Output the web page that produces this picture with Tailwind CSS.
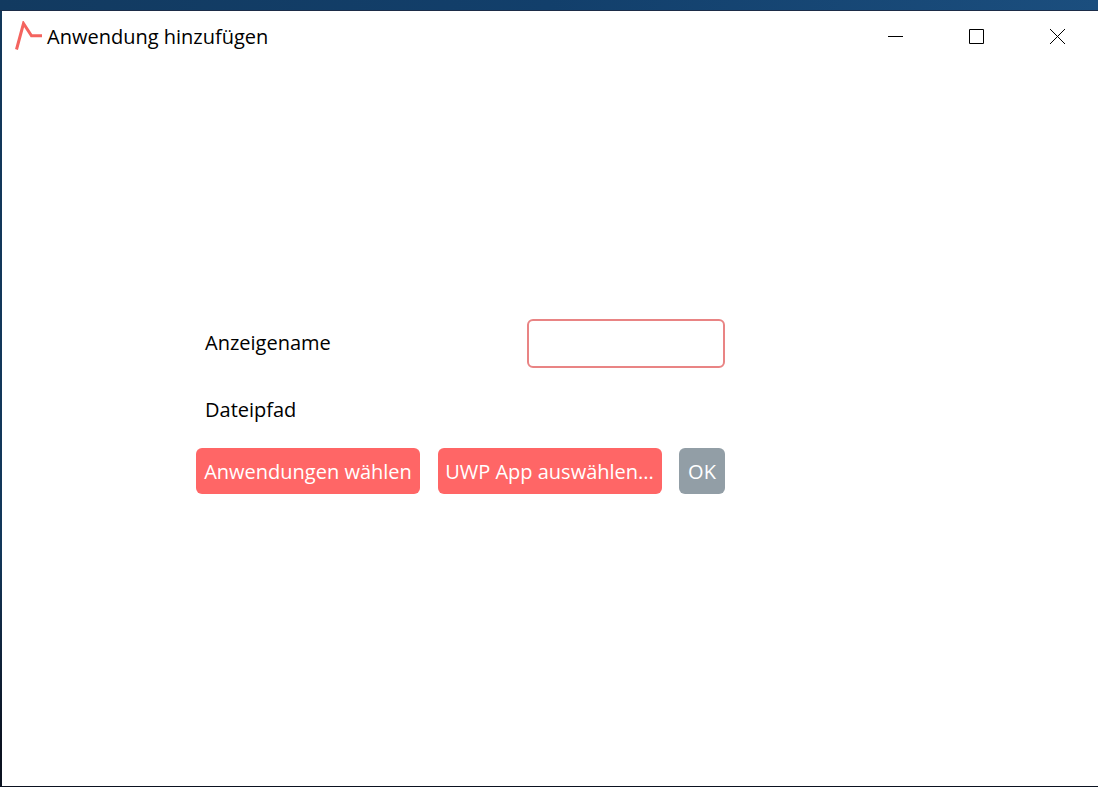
<!DOCTYPE html>
<html lang="de">
<head>
  <meta charset="utf-8">
  <meta name="viewport" content="width=device-width, initial-scale=1">
  <title>Anwendung hinzufügen</title>
  <script src="https://cdn.jsdelivr.net/npm/@tailwindcss/browser@4"></script>
</head>
<body class="min-h-screen flex flex-col bg-linear-to-b from-[#12375a] from-70% to-[#0b1220] to-95% pl-[2px] pb-px font-['Open_Sans',sans-serif] text-xl text-black">
  <!-- Desktop above the window -->
  <div class="h-[11px] -ml-[2px] shrink-0 bg-linear-to-r from-[#123a60] via-[#123f6b] via-50% to-[#1b4e7e] border-b border-[#1c2c48]"></div>

  <div class="flex-1 flex flex-col bg-white">
    <!-- Title bar -->
    <header class="flex items-start pl-3">
      <svg class="w-7 h-8 mt-[10px] mr-[5px] shrink-0" viewBox="0 0 28 32" fill="none" stroke="#f4645f" stroke-width="3">
        <path d="M2.500 28.500 9.500 2.500 17.500 14.800H28"/>
      </svg>
      <h1 class="flex-1 pt-3">Anwendung hinzufügen</h1>
      <div class="flex h-[51px]">
        <button type="button" aria-label="Minimieren" class="w-[81px] flex items-center justify-center">
          <svg class="w-[15px] h-[15px]" viewBox="0 0 15 15" stroke="#000"><path d="M0 7.500H15"/></svg>
        </button>
        <button type="button" aria-label="Maximieren" class="w-[81px] flex items-center justify-center">
          <svg class="w-[15px] h-[15px]" viewBox="0 0 15 15" fill="none" stroke="#000"><path d="M.5.5h14v14H.5z"/></svg>
        </button>
        <button type="button" aria-label="Schließen" class="w-[81px] flex items-center justify-center">
          <svg class="w-[15px] h-[15px]" viewBox="0 0 15 15" stroke="#000"><path d="M0 0 15 15M15 0 0 15"/></svg>
        </button>
      </div>
    </header>

    <!-- Form -->
    <main class="flex-1 flex flex-col justify-center pl-[194px] pb-9">
      <form class="w-[529px]" onsubmit="return false;">
        <div class="flex items-center justify-between pl-[9px]">
          <label for="anzeigename">Anzeigename</label>
          <input id="anzeigename" name="anzeigename" type="text" class="w-[198px] h-[49px] px-2 rounded-md border-2 border-[#e98484] bg-white focus:outline-none">
        </div>
        <p class="pl-[9px] mt-7 mb-6 leading-7">Dateipfad</p>
        <div class="flex justify-between text-white">
          <button type="button" class="w-[224px] h-[46px] pt-[2px] rounded-md bg-[#ff6666] whitespace-nowrap">Anwendungen wählen</button>
          <button type="button" class="w-[224px] h-[46px] pt-[2px] rounded-md bg-[#ff6666] whitespace-nowrap">UWP App auswählen...</button>
          <button type="submit" class="w-[46px] h-[46px] pt-[2px] rounded-md bg-[#929ea6]">OK</button>
        </div>
      </form>
    </main>
  </div>
</body>
</html>
